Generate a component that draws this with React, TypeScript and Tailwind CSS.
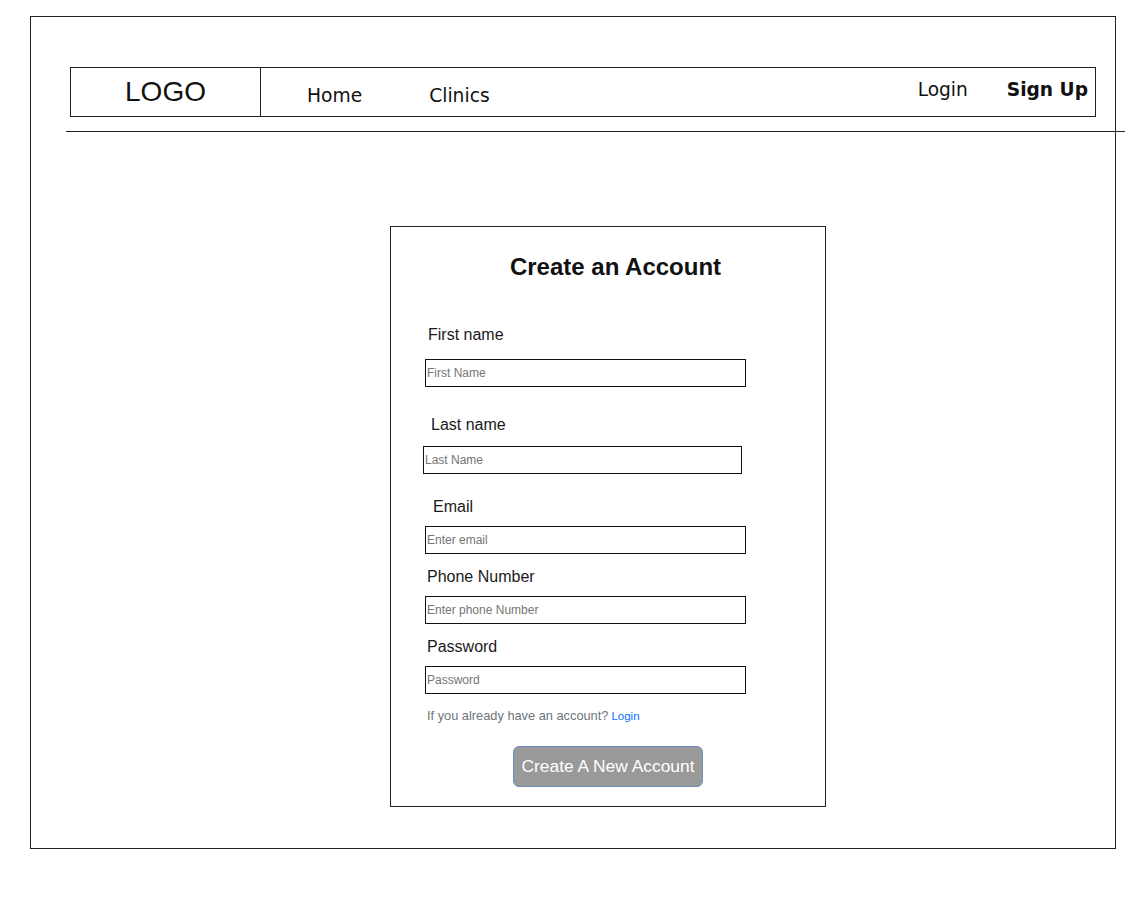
import React from 'react';

const sans = { fontFamily: '"Liberation Sans", Arial, sans-serif' };

const FIELDS = [
  { label: 'First name', placeholder: 'First Name', labelMt: 'mt-[44px]', labelMl: 'ml-[37px]', inputMt: 'mt-[14px]', inputMl: 'ml-[34px]', inputW: 'w-[321px]', type: 'text' },
  { label: 'Last name', placeholder: 'Last Name', labelMt: 'mt-[28px]', labelMl: 'ml-[40px]', inputMt: 'mt-[11px]', inputMl: 'ml-[32px]', inputW: 'w-[319px]', type: 'text' },
  { label: 'Email', placeholder: 'Enter email', labelMt: 'mt-[23px]', labelMl: 'ml-[42px]', inputMt: 'mt-[9px]', inputMl: 'ml-[34px]', inputW: 'w-[321px]', type: 'email' },
  { label: 'Phone Number', placeholder: 'Enter phone Number', labelMt: 'mt-[13px]', labelMl: 'ml-[36px]', inputMt: 'mt-[9px]', inputMl: 'ml-[34px]', inputW: 'w-[321px]', type: 'tel' },
  { label: 'Password', placeholder: 'Password', labelMt: 'mt-[13px]', labelMl: 'ml-[36px]', inputMt: 'mt-[9px]', inputMl: 'ml-[34px]', inputW: 'w-[321px]', type: 'password' },
];

function Navbar() {
  return (
    <div className="ml-[39px] mt-[50px] flex h-[50px] w-[1026px] border border-[#222] bg-white">
      <div className="flex w-[190px] items-center justify-center border-r border-[#222]">
        <span className="text-[28px] leading-none text-[#111]" style={sans}>LOGO</span>
      </div>
      <div className="flex flex-1 items-center" style={{ fontFamily: '"DejaVu Sans", Verdana, sans-serif' }}>
        <a className="ml-[46px] mt-[8px] text-[18.7px] text-[#111]">Home</a>
        <a className="ml-[67px] mt-[8px] text-[18.7px] text-[#111]">Clinics</a>
        <div className="ml-auto mr-[7px] flex items-center gap-[39px] -mt-[4px]">
          <a className="text-[18.6px] text-[#111]">Login</a>
          <a className="text-[18.6px] font-bold text-[#111]">Sign Up</a>
        </div>
      </div>
    </div>
  );
}

function SignupCard() {
  return (
    <div className="ml-[359px] mt-[94px] flex h-[581px] w-[436px] flex-col border border-[#222] bg-white" style={sans}>
      <h1 className="mt-[26px] pl-[15px] text-center text-[24px] font-bold leading-[28px] text-[#111]">
        Create an Account
      </h1>

      {FIELDS.map((f) => (
        <React.Fragment key={f.label}>
          <label className={`${f.labelMt} ${f.labelMl} text-[16px] leading-[20px] text-[#1a1a1a]`}>{f.label}</label>
          <input
            type={f.type}
            placeholder={f.placeholder}
            className={`${f.inputMt} ${f.inputMl} ${f.inputW} h-[28px] border border-[#111] bg-white pl-[1px] text-[12px] text-[#333] outline-none placeholder:text-[#757575]`}
          />
        </React.Fragment>
      ))}

      <p className="ml-[36px] mt-[15px] text-[12.8px] leading-[14px] text-[#6c757d]">
        If you already have an account?<a className="ml-[3px] text-[11.5px] text-[#0d6efd]">Login</a>
      </p>

      <div className="mt-[23px] flex justify-center">
        <button className="h-[41px] w-[190px] rounded-md border border-[#6c8ebf] bg-[#999999] text-[17.4px] text-white">
          Create A New Account
        </button>
      </div>
    </div>
  );
}

export default function App() {
  return (
    <div className="min-h-[898px] w-full overflow-hidden bg-white pt-[16px]">
      <div className="ml-[30px] h-[833px] w-[1086px] border border-[#222]">
        <Navbar />
        <div className="ml-[35px] mt-[14px] h-px w-[1059px] bg-[#222]" />
        <SignupCard />
      </div>
    </div>
  );
}
